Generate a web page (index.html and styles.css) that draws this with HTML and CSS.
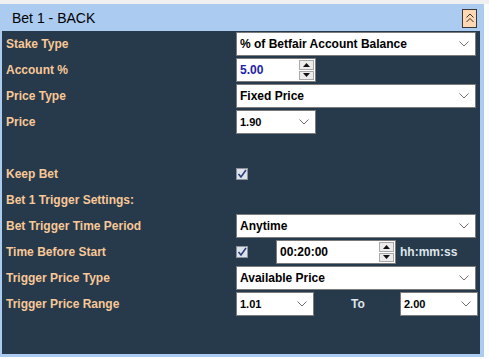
FILE: index.html
```html
<!DOCTYPE html>
<html lang="en">
<head>
    <meta charset="UTF-8">
    <title>Bet 1 - BACK</title>
    <link rel="stylesheet" href="styles.css">
</head>
<body>
    <div class="panel">
        <div class="panel-head">
            <span class="panel-title">Bet 1 - BACK</span>
            <button class="collapse">
                <svg width="10" height="12" viewBox="0 0 10 12"><path d="M1.5 5.5 L5 2 L8.5 5.5 M1.5 10 L5 6.5 L8.5 10" fill="none" stroke="#333" stroke-width="1"/></svg>
            </button>
        </div>
        <div class="panel-body">
            <div class="row">
                <label>Stake Type</label>
                <div class="select wide"><span>% of Betfair Account Balance</span><svg class="chev" width="10" height="6" viewBox="0 0 10 6"><path d="M0.5 0.5 L5 5 L9.5 0.5" fill="none" stroke="#6d6d6d"/></svg></div>
            </div>
            <div class="row">
                <label>Account %</label>
                <div class="spinbox short">
                    <span class="blue">5.00</span>
                    <div class="spin">
                        <div class="spin-btn"><svg width="7" height="4" viewBox="0 0 7 4"><path d="M0 4 L3.5 0 L7 4 Z" fill="#111"/></svg></div>
                        <div class="spin-btn"><svg width="7" height="4" viewBox="0 0 7 4"><path d="M0 0 L3.5 4 L7 0 Z" fill="#111"/></svg></div>
                    </div>
                </div>
            </div>
            <div class="row">
                <label>Price Type</label>
                <div class="select wide"><span>Fixed Price</span><svg class="chev" width="10" height="6" viewBox="0 0 10 6"><path d="M0.5 0.5 L5 5 L9.5 0.5" fill="none" stroke="#6d6d6d"/></svg></div>
            </div>
            <div class="row">
                <label>Price</label>
                <div class="select short"><span class="small">1.90</span><svg class="chev" width="10" height="6" viewBox="0 0 10 6"><path d="M0.5 0.5 L5 5 L9.5 0.5" fill="none" stroke="#6d6d6d"/></svg></div>
            </div>
            <div class="row"></div>
            <div class="row">
                <label>Keep Bet</label>
                <div class="check"><svg width="12" height="12" viewBox="0 0 12 12"><path d="M2.5 6 L5 9 L10 2" fill="none" stroke="#2b3e78" stroke-width="1.6"/></svg></div>
            </div>
            <div class="row">
                <label>Bet 1 Trigger Settings:</label>
            </div>
            <div class="row">
                <label>Bet Trigger Time Period</label>
                <div class="select wide"><span>Anytime</span><svg class="chev" width="10" height="6" viewBox="0 0 10 6"><path d="M0.5 0.5 L5 5 L9.5 0.5" fill="none" stroke="#6d6d6d"/></svg></div>
            </div>
            <div class="row">
                <label>Time Before Start</label>
                <div class="field">
                    <div class="check"><svg width="12" height="12" viewBox="0 0 12 12"><path d="M2.5 6 L5 9 L10 2" fill="none" stroke="#2b3e78" stroke-width="1.6"/></svg></div>
                    <div class="spinbox time">
                        <span>00:20:00</span>
                        <div class="spin">
                            <div class="spin-btn"><svg width="7" height="4" viewBox="0 0 7 4"><path d="M0 4 L3.5 0 L7 4 Z" fill="#111"/></svg></div>
                            <div class="spin-btn"><svg width="7" height="4" viewBox="0 0 7 4"><path d="M0 0 L3.5 4 L7 0 Z" fill="#111"/></svg></div>
                        </div>
                    </div>
                    <span class="unit">hh:mm:ss</span>
                </div>
            </div>
            <div class="row">
                <label>Trigger Price Type</label>
                <div class="select wide"><span>Available Price</span><svg class="chev" width="10" height="6" viewBox="0 0 10 6"><path d="M0.5 0.5 L5 5 L9.5 0.5" fill="none" stroke="#6d6d6d"/></svg></div>
            </div>
            <div class="row">
                <label>Trigger Price Range</label>
                <div class="field">
                    <div class="select range"><span class="small">1.01</span><svg class="chev" width="10" height="6" viewBox="0 0 10 6"><path d="M0.5 0.5 L5 5 L9.5 0.5" fill="none" stroke="#6d6d6d"/></svg></div>
                    <span class="to">To</span>
                    <div class="select range"><span class="small">2.00</span><svg class="chev" width="10" height="6" viewBox="0 0 10 6"><path d="M0.5 0.5 L5 5 L9.5 0.5" fill="none" stroke="#6d6d6d"/></svg></div>
                </div>
            </div>
        </div>
    </div>
</body>
</html>
```

FILE: styles.css
```css
body {
    margin: 0;
    border-top: 4px solid #f0f0f0;
    background-color: #fcfcfc;
    font-family: "Liberation Sans", Arial, sans-serif;
}
.panel {
    width: 484px;
    background-color: #abcbf0;
    padding-bottom: 3px;
    border-right: 1px solid #fff;
}
.panel-head {
    height: 27px;
    display: flex;
    align-items: center;
    justify-content: space-between;
    padding: 0 7px 0 12px;
}
.panel-title {
    font-size: 14px;
    color: #000;
    padding-top: 1px;
}
.collapse {
    width: 15px;
    height: 19px;
    padding: 0;
    margin-top: 1px;
    border: 1px solid #3a3a3a;
    background-color: #fdd8b2;
    display: flex;
    align-items: center;
    justify-content: center;
}
.panel-body {
    margin: 0 4px 0 2px;
    height: 323px;
    background-color: #263a4b;
}
.row {
    height: 26px;
    display: grid;
    grid-template-columns: 234px 1fr;
    align-items: center;
}
.row label {
    padding-left: 4px;
    font-size: 12px;
    font-weight: bold;
    color: #f9c897;
}
.field {
    display: flex;
    align-items: center;
}
.select, .spinbox {
    box-sizing: border-box;
    height: 24px;
    border: 1px solid #7b7b7b;
    background-color: #fff;
    display: flex;
    align-items: center;
    justify-content: space-between;
    padding: 0 3px 0 3px;
    font-size: 12px;
    font-weight: bold;
    color: #000;
}
.select .chev {
    margin-right: 3px;
}
.wide {
    width: 240px;
}
.short {
    width: 80px;
}
.range {
    width: 78px;
}
.small {
    font-size: 11px;
}
.blue {
    color: #1e22a8;
}
.spinbox {
    padding-right: 1px;
}
.time {
    width: 120px;
    margin-left: 28px;
}
.spin {
    width: 15px;
    height: 20px;
    display: flex;
    flex-direction: column;
    gap: 1px;
}
.spin-btn {
    flex: 1;
    box-sizing: border-box;
    border: 1px solid #a8a8a8;
    background-color: #ececec;
    display: flex;
    align-items: center;
    justify-content: center;
}
.check {
    box-sizing: border-box;
    width: 12px;
    height: 12px;
    border: 1px solid #8e9399;
    background-color: #dde3ec;
    display: flex;
}
.check svg {
    margin: -1px;
}
.unit {
    margin-left: 4px;
    font-size: 12px;
    font-weight: bold;
    color: #dfe4ea;
}
.to {
    width: 84px;
    padding-left: 2px;
    text-align: center;
    font-size: 12px;
    font-weight: bold;
    color: #dfe4ea;
}
```
